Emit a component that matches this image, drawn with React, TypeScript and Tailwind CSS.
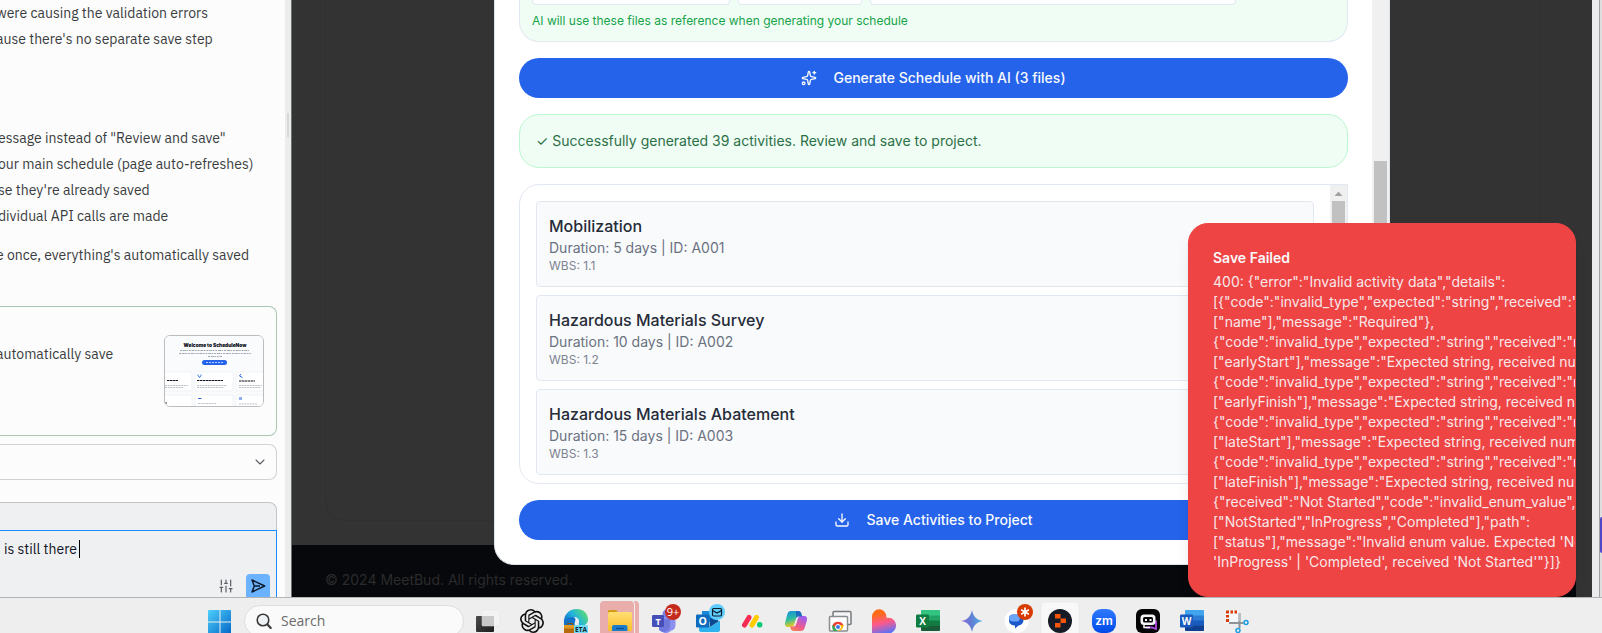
import React from "react";
import { ChevronDown, Download, SlidersVertical, Sparkles } from "lucide-react";

const fixes = [
  "were causing the validation errors",
  "ause there's no separate save step",
];

const results = [
  'essage instead of "Review and save"',
  "our main schedule (page auto-refreshes)",
  "se they're already saved",
  "dividual API calls are made",
];

const activities = [
  { name: "Mobilization", days: 5, id: "A001", wbs: "1.1" },
  { name: "Hazardous Materials Survey", days: 10, id: "A002", wbs: "1.2" },
  { name: "Hazardous Materials Abatement", days: 15, id: "A003", wbs: "1.3" },
];

const errorLines = [
  '400: {"error":"Invalid activity data","details":',
  '[{"code":"invalid_type","expected":"string","received":"undefined","path":',
  '["name"],"message":"Required"},',
  '{"code":"invalid_type","expected":"string","received":"number","path":',
  '["earlyStart"],"message":"Expected string, received number"},',
  '{"code":"invalid_type","expected":"string","received":"number","path":',
  '["earlyFinish"],"message":"Expected string, received number"},',
  '{"code":"invalid_type","expected":"string","received":"number","path":',
  '["lateStart"],"message":"Expected string, received number"},',
  '{"code":"invalid_type","expected":"string","received":"number","path":',
  '["lateFinish"],"message":"Expected string, received number"},',
  '{"received":"Not Started","code":"invalid_enum_value","options":',
  '["NotStarted","InProgress","Completed"],"path":',
  "[\"status\"],\"message\":\"Invalid enum value. Expected 'NotStarted' |",
  "'InProgress' | 'Completed', received 'Not Started'\"}]}",
];

function SendIcon() {
  return (
    <svg viewBox="0 0 24 24" className="size-4" fill="none" stroke="#0e1a2b" strokeWidth="2.2" strokeLinejoin="round" aria-hidden="true">
      <path d="M3 3l19 9-19 9 3.5-9L3 3zM6.5 12H15" />
    </svg>
  );
}

function Thumbnail() {
  return (
    <svg viewBox="0 0 98 70" className="h-full w-full" aria-hidden="true">
      <rect width="98" height="70" fill="#f9fbfc" />
      <text x="50" y="10.500" textAnchor="middle" fontFamily="Inter, sans-serif" fontSize="4.800" fontWeight="900" fill="#0b0f19">
        Welcome to ScheduleNow
      </text>
      <g stroke="#8b93a1" strokeWidth=".8" strokeDasharray="2 .8 3 .6 1.500 .9">
        <path d="M15 14.500h69M14 17.500h72M43 20.500h14" />
      </g>
      <rect x="37" y="24" width="25" height="5" rx="2.500" fill="#2563eb" />
      <path d="M41 26.500h17" stroke="#bcd0fa" strokeWidth="1" strokeDasharray="2 1" />
      <g fill="#fff" stroke="#e8ecf1" strokeWidth=".6">
        <rect x="-5" y="36" width="32" height="19" rx="1" />
        <rect x="30" y="36" width="38" height="19" rx="1" />
        <rect x="71" y="36" width="32" height="19" rx="1" />
        <rect x="-5" y="59" width="32" height="19" rx="1" />
        <rect x="30" y="59" width="38" height="19" rx="1" />
        <rect x="71" y="59" width="32" height="19" rx="1" />
      </g>
      <g fill="none" stroke="#2f6bea" strokeWidth="1">
        <path d="M33 38.500v1l1.500 2 1.500-2v-1M76 38l-1.500 2 3 1.500M33 62.500h3.500" />
      </g>
      <rect x="74" y="61" width="3" height="3" fill="#8eaef2" />
      <g stroke="#11151f" strokeWidth="1.200" strokeDasharray="2.500 .5">
        <path d="M2 44.500h11M32 44.500h26M74 45h16" />
      </g>
      <g stroke="#a3a8b0" strokeWidth=".7" strokeDasharray="2 .7">
        <path d="M0 49.500h23M0 51.500h18M32 49.500h30M32 51.500h26M74 49.500h23M74 51.500h22M33 67.500h18M74 68h18" />
      </g>
      <path d="M0 67h2" stroke="#11151f" />
    </svg>
  );
}

function AssistantPanel() {
  return (
    <aside className="flex w-[285px] shrink-0 flex-col justify-end overflow-hidden bg-[#fcfcfc] font-['IBM_Plex_Sans','Roboto',sans-serif] text-sm text-[#3a3d40]">
      <ul className="-ml-1 leading-[26px] whitespace-nowrap">
        {fixes.map((t) => (
          <li key={t}>{t}</li>
        ))}
      </ul>
      <ul className="mt-[73px] -ml-0.5 leading-[26px] whitespace-nowrap">
        {results.map((t) => (
          <li key={t}>{t}</li>
        ))}
      </ul>
      <p className="mt-[13px] -ml-1 leading-[26px] whitespace-nowrap">e once, everything's automatically saved</p>

      <section className="mt-[38px] mr-2 flex h-[130px] shrink-0 items-center rounded-r-lg border border-l-0 border-[#a9c6b2] pr-3">
        <p className="-mt-[34px] -ml-1 flex-1 leading-5 whitespace-nowrap">automatically save</p>
        <div className="h-[72px] w-[100px] overflow-hidden rounded-md border border-[#b9bdc0]">
          <Thumbnail />
        </div>
      </section>

      <button type="button" aria-label="Show more" className="mt-2 mr-2 flex h-9 shrink-0 items-center justify-end rounded-r-lg border border-l-0 border-[#d0d2d4] pr-2">
        <ChevronDown className="size-4 text-[#5a5e63]" strokeWidth={1.6} />
      </button>

      <form className="mt-[22px] mr-2 flex h-[95px] shrink-0 flex-col rounded-tr-lg border-t border-r border-[#c3c6c9] bg-[#eff0f2]">
        <div className="h-[27px] shrink-0" />
        <div className="-mr-px flex flex-1 flex-col justify-between border-t border-r border-[#1a8cff]">
          <div className="flex items-center pt-2">
            <input
              aria-label="Message"
              defaultValue="is still there"
              className="field-sizing-content h-5 bg-transparent pl-1 text-[#0e1525] outline-none"
            />
            <span className="ml-0.5 h-[18px] w-px bg-black" />
          </div>
          <div className="flex items-center justify-end gap-3 pr-1.5">
            <button type="button" aria-label="Settings" className="text-[#5a5e63]">
              <SlidersVertical className="size-4" strokeWidth={1.8} />
            </button>
            <button type="submit" aria-label="Send" className="flex h-[23px] w-6 items-center justify-center rounded-t bg-[#6bb3ff]">
              <SendIcon />
            </button>
          </div>
        </div>
      </form>
    </aside>
  );
}

function ActivityList() {
  return (
    <div className="mt-4 flex h-[300px] overflow-hidden rounded-[20px] rounded-tr-none border border-[#e2e8f0]">
      <ul className="flex-1 space-y-2 p-4">
        {activities.map((a) => (
          <li key={a.id} className="rounded border border-[#e2e8f0] bg-[#f8fafc] p-3">
            <h4 className="text-base font-medium text-[#262b38]">{a.name}</h4>
            <p className="text-sm text-[#6b7280]">
              Duration: {a.days} days | ID: {a.id}
            </p>
            <p className="text-xs text-[#7d838f]">WBS: {a.wbs}</p>
          </li>
        ))}
      </ul>
      <div className="flex w-[17px] flex-col items-center bg-[#f0f0f0]">
        <svg viewBox="0 0 17 16" className="h-4 w-full" aria-hidden="true">
          <path d="M4.500 11h8l-4-4.500z" fill="#a3a3a3" />
        </svg>
        <div className="h-12 w-[13px] bg-[#c1c1c1]" />
      </div>
    </div>
  );
}

function ScheduleDialog() {
  return (
    <div role="dialog" aria-label="Generate schedule" className="flex w-full max-w-4xl overflow-hidden rounded-b-[20px] border border-t-0 border-[#dde3ea] bg-white">
      <div className="flex-1 px-6 pb-6">
        <div className="rounded-b-[20px] border border-t-0 border-[#e2e8f0] bg-[#f0fdf4] px-3 pb-3 text-[#16a34a]">
          <div className="flex h-[5px] gap-2">
            <div className="w-[198px] rounded-b border border-t-0 border-[#e2e8f0] bg-white" />
            <div className="w-[124px] rounded-b border border-t-0 border-[#e2e8f0] bg-white" />
            <div className="w-[366px] rounded-b border border-t-0 border-[#e2e8f0] bg-white" />
          </div>
          <p className="mt-2 text-xs">AI will use these files as reference when generating your schedule</p>
        </div>
        <button type="button" className="mt-4 flex h-10 w-full items-center justify-center gap-4 rounded-[20px] bg-[#2563eb] text-sm font-medium text-[#f8fafc]">
          <Sparkles className="size-4" />
          Generate Schedule with AI (3 files)
        </button>
        <div className="mt-4 rounded-[20px] border border-[#bbf7d0] bg-[#f0fdf4] p-4 text-sm text-[#2c7048]">
          <p>✓ Successfully generated 39 activities. Review and save to project.</p>
        </div>
        <ActivityList />
        <button type="button" className="mt-4 flex h-10 w-full items-center justify-center gap-4 rounded-[20px] bg-[#2563eb] text-sm font-medium text-[#f8fafc]">
          <Download className="size-4" />
          Save Activities to Project
        </button>
      </div>
      <div className="flex w-[17px] justify-center bg-[#f0f0f0] pt-[161px]">
        <div className="w-[13px] bg-[#c1c1c1]" />
      </div>
    </div>
  );
}

function ErrorToast() {
  return (
    <div role="alert" className="absolute right-4 bottom-0 w-[388px] overflow-hidden rounded-[20px] border border-[#ef4444] bg-[#ef4444] p-6 text-sm text-[#f8fafc] shadow-lg">
      <p className="font-semibold">Save Failed</p>
      <div className="mt-1 whitespace-nowrap opacity-90">
        {errorLines.map((line, i) => (
          <div key={i}>{line}</div>
        ))}
      </div>
    </div>
  );
}

function Preview() {
  return (
    <main className="relative flex flex-1 flex-col overflow-hidden border-l border-[#6d6f70] bg-[#333333] font-['Inter',sans-serif]">
      <div className="mr-[51px] ml-[33px] flex-1 rounded-b-[20px] border border-t-0 border-[#2f3030]" />
      <footer className="mt-6 mr-4 flex h-[52px] shrink-0 items-center bg-[#07080b] px-[33px] pt-[18px] text-sm text-[#2b2b2b]">
        © 2024 MeetBud. All rights reserved.
      </footer>
      <div className="absolute inset-0 flex items-end justify-center pb-8">
        <ScheduleDialog />
      </div>
      <ErrorToast />
    </main>
  );
}

function TaskIcon({ label, children }: { label: string; children: React.ReactNode }) {
  return (
    <button type="button" aria-label={label} className="w-11 shrink-0">
      <svg viewBox="0 0 44 36" className="h-9 w-11" aria-hidden="true">
        {children}
      </svg>
    </button>
  );
}

function OfficeIcon({ letter, shades }: { letter: string; shades: string[] }) {
  return (
    <>
      <rect x="15" y="12" width="19" height="21" rx="1.500" fill={shades[1]} />
      <path d="M15 17.500v-4a1.500 1.500 0 0 1 1.500-1.500h16a1.500 1.500 0 0 1 1.500 1.500v4z" fill={shades[0]} />
      <path d="M15 22.500h19v5H15z" fill={shades[2]} />
      <path d="M15 27.500h19v4a1.500 1.500 0 0 1-1.500 1.500h-16a1.500 1.500 0 0 1-1.500-1.500z" fill={shades[3]} />
      <rect x="10" y="16.500" width="13" height="13" rx="1.200" fill={shades[4]} />
      <text x="16.500" y="26.800" textAnchor="middle" fontFamily="Open Sans, sans-serif" fontWeight="700" fontSize="10" fill="#fff">
        {letter}
      </text>
    </>
  );
}

function Taskbar() {
  return (
    <nav aria-label="Taskbar" className="flex h-9 shrink-0 overflow-hidden border-t border-[#b4b4b4] bg-[#eeeeee] pl-[198px]">
      <svg className="absolute size-0" aria-hidden="true">
        <defs>
          <linearGradient id="win" x1="0" y1="0" x2="1" y2="1">
            <stop offset="0" stopColor="#4fd0fb" />
            <stop offset="1" stopColor="#0467c8" />
          </linearGradient>
          <linearGradient id="edge" x1="0" y1="0.700" x2="1" y2="0.200">
            <stop offset="0" stopColor="#0f6fc9" />
            <stop offset="0.450" stopColor="#22b4dc" />
            <stop offset="1" stopColor="#5fe06a" />
          </linearGradient>
          <linearGradient id="folder" x1="0" y1="0" x2="0" y2="1">
            <stop offset="0" stopColor="#ffdf73" />
            <stop offset="1" stopColor="#fcbe2c" />
          </linearGradient>
          <linearGradient id="copA" x1="0" y1="0" x2="0.300" y2="1">
            <stop offset="0" stopColor="#1389e0" />
            <stop offset="0.550" stopColor="#2fbf9f" />
            <stop offset="1" stopColor="#f3c91c" />
          </linearGradient>
          <linearGradient id="copB" x1="0.500" y1="0" x2="0" y2="1">
            <stop offset="0" stopColor="#a55de8" />
            <stop offset="0.550" stopColor="#ef5a8c" />
            <stop offset="1" stopColor="#fa8a4a" />
          </linearGradient>
          <linearGradient id="love" x1="0.350" y1="0" x2="0.600" y2="1">
            <stop offset="0.150" stopColor="#ff6a17" />
            <stop offset="0.550" stopColor="#fb5a8e" />
            <stop offset="1" stopColor="#4f73ff" />
          </linearGradient>
          <linearGradient id="gem" x1="0" y1="0.500" x2="1" y2="0.400">
            <stop offset="0" stopColor="#9b72d8" />
            <stop offset="0.400" stopColor="#6478d4" />
            <stop offset="1" stopColor="#4fb4e0" />
          </linearGradient>
          <linearGradient id="dark" x1="0" y1="0" x2="1" y2="1">
            <stop offset="0" stopColor="#4a4a4a" />
            <stop offset="1" stopColor="#1c1c1c" />
          </linearGradient>
          <linearGradient id="zoom" x1="0" y1="0" x2="0" y2="1">
            <stop offset="0" stopColor="#2e7bff" />
            <stop offset="1" stopColor="#0049e8" />
          </linearGradient>
        </defs>
      </svg>

      <TaskIcon label="Start">
        <g fill="url(#win)">
          <path d="M10 13a1 1 0 0 1 1-1h10.500v11.500H10zM22.500 12H32a1 1 0 0 1 1 1v10.500H22.500zM10 24.500h11.500V36H10zM22.500 24.500H33V36H22.500z" />
        </g>
      </TaskIcon>

      <label className="mx-0.5 mt-[7px] flex h-8 w-[220px] shrink-0 items-center gap-2 rounded-full border border-[#dedede] bg-[#fafafa] pl-2.5">
        <svg viewBox="0 0 18 18" className="size-[18px] shrink-0" fill="none" stroke="#3b3b3b" strokeLinecap="round" aria-hidden="true">
          <circle cx="8" cy="8" r="5.800" strokeWidth="1.600" fill="#eef1f3" />
          <path d="M12.500 12.500l3.200 3.500" strokeWidth="2.200" />
        </svg>
        <input
          aria-label="Search"
          placeholder="Search"
          className="w-full bg-transparent font-['Open_Sans',sans-serif] text-sm outline-none placeholder:text-[#6b6b6b]"
        />
      </label>

      <TaskIcon label="Task view">
        <rect x="10" y="18" width="18" height="16" rx="1" fill="url(#dark)" />
        <rect x="16" y="12" width="18" height="16" rx="1" fill="#f4f4f4" fillOpacity=".88" stroke="#e0e0e0" strokeWidth=".5" />
        <path d="M16 18h12v10H16z" fill="#bdbdbd" fillOpacity=".6" />
      </TaskIcon>

      <TaskIcon label="ChatGPT">
        <path
          transform="translate(10 11)"
          fill="#111"
          d="M22.2819 9.8211a5.9847 5.9847 0 0 0-.5157-4.9108 6.0462 6.0462 0 0 0-6.5098-2.9A6.0651 6.0651 0 0 0 4.9807 4.1818a5.9847 5.9847 0 0 0-3.9977 2.9 6.0462 6.0462 0 0 0 .7427 7.0966 5.98 5.98 0 0 0 .511 4.9107 6.051 6.051 0 0 0 6.5146 2.9001A5.9847 5.9847 0 0 0 13.2599 24a6.0557 6.0557 0 0 0 5.7718-4.2058 5.9894 5.9894 0 0 0 3.9977-2.9001 6.0557 6.0557 0 0 0-.7475-7.0729zm-9.022 12.6081a4.4755 4.4755 0 0 1-2.8764-1.0408l.1419-.0804 4.7783-2.7582a.7948.7948 0 0 0 .3927-.6813v-6.7369l2.02 1.1686a.071.071 0 0 1 .038.052v5.5826a4.504 4.504 0 0 1-4.4945 4.4944zm-9.6607-4.1254a4.4708 4.4708 0 0 1-.5346-3.0137l.142.0852 4.783 2.7582a.7712.7712 0 0 0 .7806 0l5.8428-3.3685v2.3324a.0804.0804 0 0 1-.0332.0615L9.74 19.9502a4.4992 4.4992 0 0 1-6.1408-1.6464zM2.3408 7.8956a4.485 4.485 0 0 1 2.3655-1.9728V11.6a.7664.7664 0 0 0 .3879.6765l5.8144 3.3543-2.0201 1.1685a.0757.0757 0 0 1-.071 0l-4.8303-2.7865A4.504 4.504 0 0 1 2.3408 7.872zm16.5963 3.8558L13.1038 8.364 15.1192 7.2a.0757.0757 0 0 1 .071 0l4.8303 2.7913a4.4944 4.4944 0 0 1-.6765 8.1042v-5.6772a.79.79 0 0 0-.407-.667zm2.0107-3.0231l-.142-.0852-4.7735-2.7818a.7759.7759 0 0 0-.7854 0L9.409 9.2297V6.8974a.0662.0662 0 0 1 .0284-.0615l4.8303-2.7866a4.4992 4.4992 0 0 1 6.6802 4.66zM8.3065 12.863l-2.02-1.1638a.0804.0804 0 0 1-.038-.0567V6.0742a4.4992 4.4992 0 0 1 7.3757-3.4537l-.142.0805L8.704 5.459a.7948.7948 0 0 0-.3927.6813zm1.0976-2.3654l2.602-1.4998 2.6069 1.4998v2.9994l-2.5974 1.4997-2.6067-1.4997Z"
        />
      </TaskIcon>

      <TaskIcon label="Edge Beta">
        <path d="M10 26c-1-9 5-15 12.500-15S34 16 34 21.500 29 28 26 27.500c-2-.4-1-2-1-4.500 0-2-2-4-5-4-5 0-9 3-10 7z" fill="url(#edge)" />
        <path d="M10 24c2-4 6-5.500 9-5 2.500.4 3 2.500 2 4.500-1 3 0 5 1 6H10z" fill="#1173c9" />
        <rect x="10" y="27" width="12" height="9" rx="1" fill="#b56a0c" />
        <path d="M10 27h12v3.500H10z" fill="#e39a25" />
        <path d="M13.500 27v-1.500h5V27" stroke="#8a4d05" fill="none" />
        <rect x="20" y="27" width="14" height="9" rx="1" fill="#74dcf7" />
        <text x="27" y="33.800" textAnchor="middle" fontFamily="Open Sans, sans-serif" fontWeight="700" fontSize="6.500" fill="#10242c">
          ETA
        </text>
      </TaskIcon>

      <TaskIcon label="File Explorer">
        <path d="M36 3h1a4 4 0 0 1 4 4v29h-4V7z" fill="#e9aeab" />
        <rect x="2" y="3" width="34" height="40" rx="4" fill="#e9aeab" />
        <path d="M10 14a2 2 0 0 1 2-2h6l2 2.500v4H10z" fill="#d99a16" />
        <rect x="10" y="14" width="24" height="19" rx="1.500" fill="url(#folder)" />
        <path d="M10 14h7l2-1.500h-9z" fill="#d99a16" />
        <path d="M14 33v-4a2 2 0 0 1 2-2h11.500a2 2 0 0 1 2 2v4z" fill="#1d7ccb" />
        <path d="M18 30.500h8" stroke="#0f4f93" strokeWidth="1.400" />
      </TaskIcon>

      <TaskIcon label="Teams, 9+ notifications">
        <circle cx="25" cy="16" r="4.500" fill="#7b83eb" />
        <path d="M17 20.500h14.500a2 2 0 0 1 2 2V27a6 6 0 0 1-4.500 5.800A7 7 0 0 1 17 29z" fill="#8b8ff0" />
        <path d="M17 20.500h11V29a6.500 6.500 0 0 1-11 3z" fill="#7078dc" />
        <rect x="10" y="17" width="12" height="12" rx="1.200" fill="#464eb8" />
        <text x="16" y="26.500" textAnchor="middle" fontFamily="Open Sans, sans-serif" fontWeight="700" fontSize="9" fill="#fff">
          T
        </text>
        <circle cx="31" cy="14" r="8" fill="#c42b1c" />
        <text x="31" y="17.800" textAnchor="middle" fontFamily="Open Sans, sans-serif" fontSize="11" fill="#fff">
          9+
        </text>
      </TaskIcon>

      <TaskIcon label="Outlook">
        <path d="M16 13h14a2 2 0 0 1 2 2v9H16z" fill="#1a88d8" />
        <path d="M13 24l11 5 10-6.500V32a2 2 0 0 1-2 2H15a2 2 0 0 1-2-2z" fill="#2fb1ee" />
        <path d="M24 20l9 3-9 6z" fill="#0c4a8f" />
        <rect x="10" y="16.500" width="13.500" height="13" rx="1.200" fill="#0f6cbd" />
        <text x="16.800" y="27" textAnchor="middle" fontFamily="Open Sans, sans-serif" fontWeight="700" fontSize="10.500" fill="#fff">
          O
        </text>
        <circle cx="31" cy="14" r="8" fill="#60cdff" />
        <rect x="26.500" y="10.500" width="9" height="7.500" rx="1.200" fill="none" stroke="#0b1c26" strokeWidth="1.200" />
        <path d="M26.500 12.500l4.500 2.500 4.500-2.500" fill="none" stroke="#0b1c26" strokeWidth="1.100" />
      </TaskIcon>

      <TaskIcon label="monday.com">
        <path d="M14.500 27l4.500-7.500" stroke="#f62b54" strokeWidth="5" strokeLinecap="round" />
        <path d="M22 27l4.500-7.500" stroke="#ffcc00" strokeWidth="5" strokeLinecap="round" />
        <circle cx="29.700" cy="26.700" r="2.700" fill="#00ca72" />
      </TaskIcon>

      <TaskIcon label="Copilot">
        <path d="M17 13h7c2 0 3 1 3.500 3l.8 2.500h-3.600c-1.600 0-2.300.8-2.800 2.500l-1.500 5c-.6 2-1.700 3-3.500 3h-3c-2.500 0-3.400-2-2.800-4.500l2.300-8.500c.6-2 1.600-3 3.600-3z" fill="url(#copA)" />
        <path d="M27 33h-7c-2 0-3-1-3.500-3l-.5-1.500h2.600c1.900 0 3-.8 3.600-2.600l1.500-4.900c.6-2 1.600-3 3.500-3h3c2.500 0 3.300 2 2.700 4.500L30.600 30c-.6 2-1.600 3-3.600 3z" fill="url(#copB)" />
        <path d="M24 13c2 0 3 1 3.500 3l.8 2.500h-3.600c-1.400 0-2.100.6-2.600 2L22 13z" fill="#1c4fc4" opacity=".7" />
      </TaskIcon>

      <TaskIcon label="Remote Desktop">
        <rect x="15" y="13.500" width="18" height="13" rx="1" fill="#f5f5f5" stroke="#76797c" strokeWidth="1.500" />
        <rect x="11.500" y="18.500" width="18" height="14.500" rx="1" fill="#fff" stroke="#8a8d90" strokeWidth="1.500" />
        <path d="M14.300 28a6 6 0 0 1 11.400 0l-5.700 3z" fill="#ea4335" />
        <path d="M20 27h5.400a6 6 0 0 1-5 6z" fill="#fbbc04" />
        <path d="M14.800 26.500l4.500 6.500h-3.500a6 6 0 0 1-1-6.500z" fill="#34a853" />
        <circle cx="20" cy="29" r="2.500" fill="#3b78e7" stroke="#fff" />
      </TaskIcon>

      <TaskIcon label="Lovable">
        <path d="M10 36V18.500a7.200 7.200 0 0 1 14.400 0v1.200h2.100a7.600 7.600 0 0 1 7.600 7.600c0 4.500-3 7.600-7.600 8.700z" fill="url(#love)" />
      </TaskIcon>

      <TaskIcon label="Excel">
        <OfficeIcon letter="X" shades={["#33c481", "#21a366", "#107c41", "#185c37", "#107c41"]} />
      </TaskIcon>

      <TaskIcon label="Gemini">
        <path d="M22 12c1.200 6.500 4.500 9.800 11 11-6.500 1.200-9.800 4.500-11 11-1.200-6.500-4.500-9.800-11-11 6.500-1.200 9.800-4.500 11-11z" fill="url(#gem)" />
      </TaskIcon>

      <TaskIcon label="Messages">
        <circle cx="22.500" cy="23" r="12" fill="#fdfdfd" />
        <path d="M15 20a4 4 0 0 1 4-3.500h6a4.500 4.500 0 0 1 4.500 4.500v1a5.500 5.500 0 0 1-5 5.500l-3.500 3v-3h-1a5 5 0 0 1-5-5z" fill="#1a57c9" />
        <path d="M15 20a4 4 0 0 1 4-3.500h5a4 4 0 0 1 0 7h-5a4 4 0 0 1-4-3.500z" fill="#6aa5f7" />
        <circle cx="31" cy="14" r="8" fill="#d83b01" />
        <path d="M31 9.500v9M27.100 11.800l7.800 4.500M27.100 16.300l7.800-4.500" stroke="#fff" strokeWidth="1.700" />
      </TaskIcon>

      <TaskIcon label="Replit">
        <rect x="3" y="4" width="38" height="40" rx="4" fill="#f8f8f8" stroke="#e6e6e6" strokeWidth=".6" />
        <circle cx="22" cy="23" r="12" fill="#161b26" />
        <path d="M17 16h5.500v4.500H17zM22.500 20.500h5.500v4.500h-5.500zM17 25h5.500v4.500H17z" fill="#f5540a" />
      </TaskIcon>

      <TaskIcon label="Zoom">
        <rect x="10" y="11" width="24" height="24" rx="9" fill="url(#zoom)" />
        <text x="22" y="26.800" textAnchor="middle" fontFamily="Inter, sans-serif" fontWeight="600" fontSize="12" fill="#fff">
          zm
        </text>
      </TaskIcon>

      <TaskIcon label="Robot assistant">
        <rect x="10" y="11" width="24" height="24" rx="6" fill="#050505" />
        <path d="M20 29.500h6l4 1.500v-8.500" stroke="#b04ce0" strokeWidth="1.800" fill="none" />
        <rect x="14.500" y="16.500" width="15" height="10.500" rx="3.500" fill="#f7f7f7" />
        <rect x="17" y="19" width="10" height="5.500" rx="1.500" fill="#0a0a0a" />
        <path d="M19 21h2v2h-2zM23.500 21h2v2h-2z" fill="#fff" />
        <path d="M18 27v2.500h6" stroke="#f7f7f7" strokeWidth="1.500" fill="none" />
      </TaskIcon>

      <TaskIcon label="Word">
        <OfficeIcon letter="W" shades={["#41a5ee", "#2b7cd3", "#185abd", "#103f91", "#185abd"]} />
      </TaskIcon>

      <TaskIcon label="Snipping Tool">
        <rect x="12" y="13" width="13" height="13" fill="#f4f6f8" />
        <path d="M12 12.500h3v3h-3zM16.500 12.500h2.500v3h-2.500zM20.500 12.500h2.500v3h-2.500zM12 17h3v2.500h-3zM12 21h3v3h-3z" fill="#d83b01" />
        <path d="M25.500 15v15M15 25h14.500" stroke="#8d9499" strokeWidth="2" />
        <path d="M25.500 15v8" stroke="#b9bec2" strokeWidth="2" />
        <circle cx="32" cy="24.500" r="2" fill="none" stroke="#1b9de2" strokeWidth="1.500" />
        <circle cx="24" cy="32.500" r="2" fill="none" stroke="#1b9de2" strokeWidth="1.500" />
      </TaskIcon>
    </nav>
  );
}

export default function App() {
  return (
    <div className="flex h-screen flex-col overflow-hidden bg-[#ebecee]">
      <div className="flex min-h-0 flex-1">
        <AssistantPanel />
        <div className="flex w-1.5 shrink-0 justify-center bg-[#ebecec] pt-[113px]">
          <div className="h-6 w-0.5 bg-[#d6d8d9]" />
        </div>
        <Preview />
        <div className="w-[7px] shrink-0 bg-[#ebebee]" />
        <div className="flex w-[3px] shrink-0 flex-col justify-end border-l border-[#a0a0a0] bg-[#dedede] pb-11">
          <div className="h-9 rounded-l bg-[#5046c8]" />
        </div>
      </div>
      <Taskbar />
    </div>
  );
}
